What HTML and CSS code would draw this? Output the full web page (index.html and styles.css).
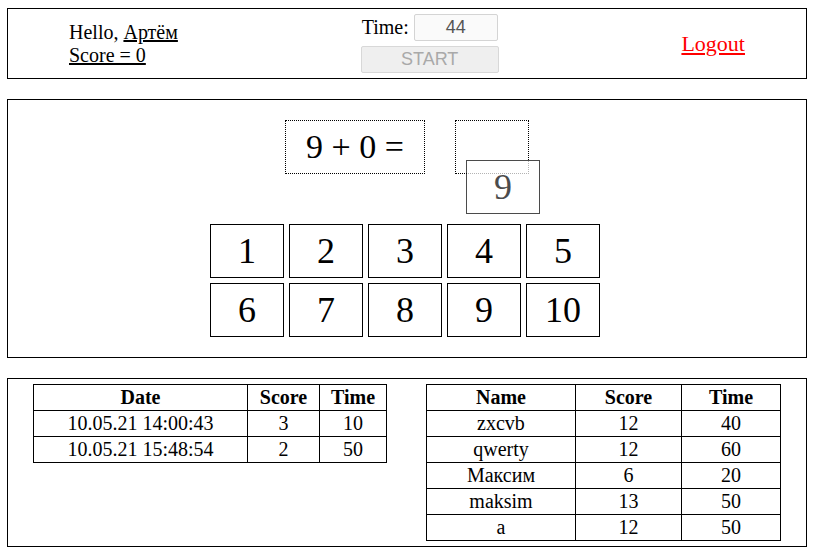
FILE: index.html
```html
<!DOCTYPE html>
<html lang="ru">
<head>
<meta charset="utf-8">
<title>Math game</title>
<link rel="stylesheet" href="styles.css">
</head>
<body>
<div class="page">
  <header class="box top">
    <div class="user">
      <div>Hello, <a href="#" class="link">Артём</a></div>
      <div><a href="#" class="link">Score = 0</a></div>
    </div>
    <div class="timer">
      <div class="time-row">Time: <input class="time-input" type="text" value="44" readonly></div>
      <button class="start" disabled>START</button>
    </div>
    <a href="#" class="logout">Logout</a>
  </header>

  <main class="box game">
    <div class="task">
      <div class="equation">9 + 0 =</div>
      <div class="answer">
        <div class="num ghost">9</div>
      </div>
    </div>
    <div class="grid">
      <div class="num">1</div>
      <div class="num">2</div>
      <div class="num">3</div>
      <div class="num">4</div>
      <div class="num">5</div>
      <div class="num">6</div>
      <div class="num">7</div>
      <div class="num">8</div>
      <div class="num">9</div>
      <div class="num">10</div>
    </div>
  </main>

  <section class="box results">
    <table class="tbl tbl-left">
      <colgroup><col class="c-date"><col class="c-score1"><col class="c-time1"></colgroup>
      <tr><th>Date</th><th>Score</th><th>Time</th></tr>
      <tr><td>10.05.21 14:00:43</td><td>3</td><td>10</td></tr>
      <tr><td>10.05.21 15:48:54</td><td>2</td><td>50</td></tr>
    </table>
    <table class="tbl">
      <colgroup><col class="c-name"><col class="c-score2"><col class="c-time2"></colgroup>
      <tr><th>Name</th><th>Score</th><th>Time</th></tr>
      <tr><td>zxcvb</td><td>12</td><td>40</td></tr>
      <tr><td>qwerty</td><td>12</td><td>60</td></tr>
      <tr><td>Максим</td><td>6</td><td>20</td></tr>
      <tr><td>maksim</td><td>13</td><td>50</td></tr>
      <tr><td>a</td><td>12</td><td>50</td></tr>
    </table>
  </section>
</div>
</body>
</html>
```
FILE: styles.css
```css
* { box-sizing: border-box; }

html, body {
  margin: 0;
  background: #fff;
}

body {
  font-family: "Liberation Serif", "Times New Roman", serif;
  font-size: 20px;
  color: #000;
}

.page {
  padding: 8px 0 0 7px;
}

.box {
  width: 800px;
  border: 1px solid #000;
  margin-bottom: 20px;
}

/* header */
.top {
  height: 71px;
  display: flex;
  align-items: center;
  justify-content: space-between;
  padding: 0 61px 0 61px;
}

.user {
  line-height: 23px;
}

.link {
  color: #000;
  text-decoration: underline;
}

.timer {
  width: 138px;
  display: flex;
  flex-direction: column;
  align-items: center;
  gap: 5px;
}

.time-row {
  white-space: nowrap;
  line-height: 27px;
  display: flex;
  align-items: center;
  gap: 5px;
}

.time-input {
  width: 84px;
  height: 27px;
  margin: 0;
  padding: 0;
  border: 1px solid #d4d4d4;
  border-radius: 2px;
  background: #fafafa;
  color: #555;
  font-family: "Liberation Sans", Arial, sans-serif;
  font-size: 18px;
  text-align: center;
}

.start {
  width: 138px;
  height: 27px;
  margin: 0;
  padding: 0;
  border: 1px solid #d8d8d8;
  border-radius: 2px;
  background: #efefef;
  color: #a9a9a9;
  font-family: "Liberation Sans", Arial, sans-serif;
  font-size: 18px;
}

.logout {
  color: #f00;
  font-size: 22px;
  text-decoration: underline;
}

/* game */
.game {
  padding: 20px 4px 20px 0;
}

.task {
  display: flex;
  justify-content: center;
  gap: 30px;
  padding-left: 4px;
}

.equation {
  width: 140px;
  height: 54px;
  border: 1px dotted #000;
  display: flex;
  align-items: center;
  justify-content: center;
  font-size: 34px;
}

.answer {
  position: relative;
  width: 74px;
  height: 54px;
  border: 1px dotted #000;
}

.grid {
  margin: 50px auto 0;
  width: 390px;
  display: grid;
  grid-template-columns: repeat(5, 74px);
  gap: 5px;
}

.num {
  width: 74px;
  height: 54px;
  border: 1px solid #000;
  background: #fff;
  display: flex;
  align-items: center;
  justify-content: center;
  font-size: 36px;
  line-height: 1;
}

.ghost {
  position: absolute;
  left: 10px;
  top: 39px;
  opacity: 0.7;
}

/* results */
.results {
  display: flex;
  justify-content: space-between;
  align-items: flex-start;
  padding: 5px 25px;
  margin-bottom: 0;
}

.tbl {
  border-collapse: collapse;
  font-size: 20px;
  table-layout: fixed;
  width: 354px;
}

.tbl-left {
  width: 353px;
}

.tbl th,
.tbl td {
  border: 1px solid #000;
  padding: 1px;
  height: 26px;
  line-height: 23px;
  text-align: center;
  white-space: nowrap;
}

.tbl th { font-weight: bold; }

.c-date { width: 214px; }
.c-score1 { width: 72px; }
.c-time1 { width: 67px; }
.c-name { width: 149px; }
.c-score2 { width: 106px; }
.c-time2 { width: 99px; }
```
